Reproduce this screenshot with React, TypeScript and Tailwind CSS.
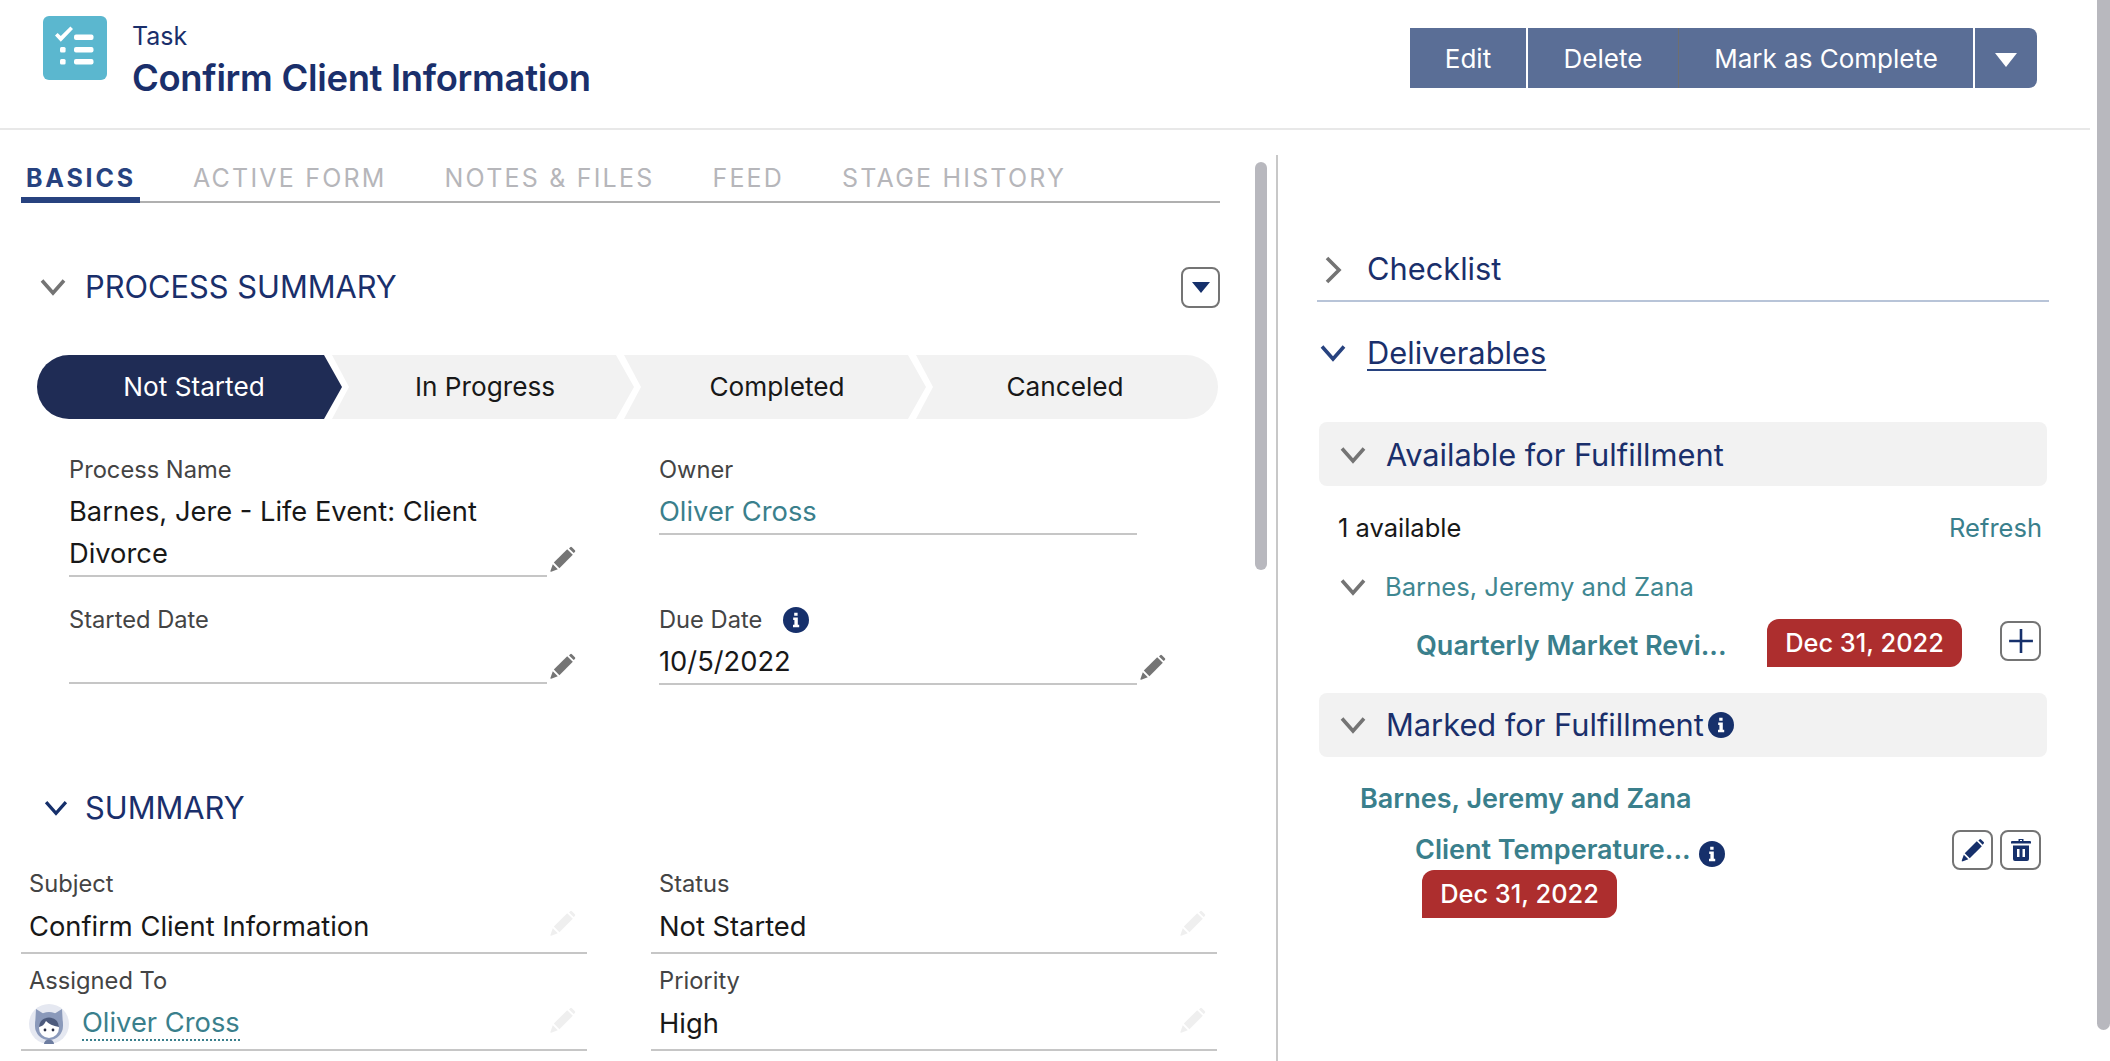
import { ReactNode } from 'react'

function Chevron({ color = '#747474', className = '' }: { color?: string; className?: string }) {
  return (
    <svg viewBox="0 0 26 18" className={`h-[18px] w-[26px] shrink-0 ${className}`} fill="none" stroke={color} strokeWidth="3.6">
      <path d="M2 2.5 13 15 24 2.5" />
    </svg>
  )
}

function ChevronRight() {
  return (
    <svg viewBox="0 0 18 28" className="ml-[7px] h-[28px] w-[18px] shrink-0" fill="none" stroke="#747474" strokeWidth="3.6">
      <path d="M3 2 15 14 3 26" />
    </svg>
  )
}

function Pencil({ color = '#757575', className = '' }: { color?: string; className?: string }) {
  return (
    <svg viewBox="0 0 26 26" className={`h-[26px] w-[26px] shrink-0 ${className}`} fill={color}>
      <path d="M20.2 1.2a1.2 1.2 0 0 1 1.7 0l3 3a1.2 1.2 0 0 1 0 1.7l-1.2 1.2-4.7-4.7z" />
      <path d="M17.2 3.2l5.6 5.6L9.4 22.2l-5.6-5.6z" />
      <path d="M2.8 18.2l5 5-6.6 2.5a.6.6 0 0 1-.8-.8z" />
    </svg>
  )
}

function Info({ className = '' }: { className?: string }) {
  return (
    <svg viewBox="0 0 26 26" className={`h-[26px] w-[26px] shrink-0 ${className}`}>
      <circle cx="13" cy="13" r="13" fill="#16306b" />
      <path d="M11.2 5.8h3.4v3h-3.4zM10.2 10.6h4.6v7.2h1.4v2.4h-6.2v-2.4h1.4v-4.8h-1.2z" fill="#fff" />
    </svg>
  )
}

function TaskIcon() {
  return (
    <div className="flex h-[64px] w-[64px] shrink-0 items-center justify-center rounded-[6px] bg-[#5bb7cf]">
      <svg viewBox="0 0 64 64" className="h-[64px] w-[64px]" fill="#fff">
        <path d="M12 19.5l2.6-2.6 3.2 3.2 9.6-9.6 2.6 2.6-12.2 12.6z" />
        <rect x="31" y="18.5" width="19.5" height="5.6" rx="2" />
        <rect x="17" y="31" width="5.6" height="5.6" rx="1.5" />
        <rect x="31" y="31" width="19.5" height="5.6" rx="2" />
        <rect x="17" y="43" width="5.6" height="5.6" rx="1.5" />
        <rect x="31" y="43" width="19.5" height="5.6" rx="2" />
      </svg>
    </div>
  )
}

function Avatar() {
  return (
    <svg viewBox="0 0 40 40" className="h-[40px] w-[40px] shrink-0">
      <circle cx="20" cy="20" r="20" fill="#e5e8f1" />
      <path d="M7 5l8 5h10l8-5 1 17H6z" fill="#8a99ba" />
      <circle cx="20" cy="22" r="14" fill="#8a99ba" />
      <circle cx="20" cy="24" r="10" fill="#fff" />
      <path d="M10 23c3-.5 5.500-2.500 7-6 2.500 3 7 5 13 6-.5-6-4.500-9.500-10-9.500S10.500 17 10 23z" fill="#4c5a7c" />
      <circle cx="16" cy="26" r="1.400" fill="#2a2f45" />
      <circle cx="24" cy="26" r="1.400" fill="#2a2f45" />
      <path d="M15 40a5 4.500 0 0 1 10 0z" fill="#6d7da0" />
    </svg>
  )
}

function IconBtn({ children }: { children: ReactNode }) {
  return (
    <button className="flex h-[40px] w-[41px] shrink-0 items-center justify-center rounded-[8px] border-2 border-[#747474] bg-white">
      {children}
    </button>
  )
}

function Badge() {
  return (
    <div className="flex h-[48px] w-[195px] shrink-0 items-center justify-center rounded-t-[12px] rounded-br-[12px] bg-[#ad2e2e] text-[25.4px] font-medium text-white">
      Dec 31, 2022
    </div>
  )
}

function ProcessField({ label, info, lines, teal, pencil, tall }: { label: string; info?: boolean; lines: string[]; teal?: boolean; pencil?: boolean; tall?: boolean }) {
  return (
    <div className="w-[507px]">
      <div className="flex h-[32px] items-center gap-[21px] text-[23.7px] leading-[32px] text-[#444]">
        {label}
        {info && <Info />}
      </div>
      <div className={`flex items-end ${tall ? 'mt-[5px]' : 'mt-[4px]'}`}>
        <div className={`w-[478px] border-b-2 border-[#c6c6c6] text-[27.3px] leading-[42px] ${teal ? 'text-[#3a7f8c]' : 'text-[#181818]'}`}>
          {lines.length === 0 && <div className="h-[42px]" />}
          {lines.map((l) => (
            <div key={l}>{l}</div>
          ))}
        </div>
        {pencil && <Pencil className="mb-[5px] ml-[3px]" />}
      </div>
    </div>
  )
}

function SummaryField({ label, children }: { label: string; children: ReactNode }) {
  return (
    <div className="w-[566px]">
      <div className="h-[32px] pl-[8px] text-[23.7px] leading-[32px] text-[#444]">{label}</div>
      <div className="flex h-[54px] items-center justify-between border-b-2 border-[#c6c6c6] pl-[8px] pr-[11px] pt-[2px] text-[27.3px] text-[#181818]">
        <div className="flex items-center">{children}</div>
        <Pencil color="#efefef" className="-mt-[8px]" />
      </div>
    </div>
  )
}

const stages = [
  { name: 'Not Started', first: true },
  { name: 'In Progress' },
  { name: 'Completed' },
  { name: 'Canceled', last: true },
]

export default function App() {
  return (
    <div className="flex h-[1061px] w-[2110px] overflow-hidden bg-white font-['Inter',sans-serif]">
      <div className="w-[2097px] shrink-0">
        <header className="flex h-[130px] w-[2090px] items-start justify-between border-b-2 border-[#e8e8e8]">
          <div className="ml-[43px] mt-[16px] flex">
            <TaskIcon />
            <div className="ml-[25px] mt-[4px]">
              <div className="text-[25px] leading-[32px] text-[#1a2f6b]">Task</div>
              <div className="mt-[4px] text-[36.4px] font-semibold leading-[44px] tracking-[-0.3px] text-[#1a2f6b]">Confirm Client Information</div>
            </div>
          </div>
          <div className="mr-[53px] mt-[28px] flex h-[60px] text-[26px] text-white">
            <button className="w-[116px] bg-[#5a6e96]">Edit</button>
            <button className="ml-[2px] w-[151px] border-r border-[#6f6f6f] bg-[#5a6e96]">Delete</button>
            <button className="w-[294px] bg-[#5a6e96]">Mark as Complete</button>
            <button className="ml-[2px] flex w-[62px] items-center justify-center rounded-r-[8px] bg-[#5a6e96] pt-[4px]">
              <svg viewBox="0 0 22 14" className="h-[14px] w-[22px]" fill="#fff">
                <path d="M0 0h22L11 14z" />
              </svg>
            </button>
          </div>
        </header>

        <div className="flex h-[931px]">
          <div className="w-[1255px] shrink-0 pl-[21px]">
            <div className="flex h-[73px] w-[1199px] items-end gap-[58px] border-b-2 border-[#b0b0b0] text-[25px] leading-[32px] tracking-[2.2px] text-[#b6b6ba]">
              <div className="-mb-[2px] mr-[-5px] h-[50px] w-[119px] border-b-[6px] border-[#27427f] pl-[5px] pt-[9px] font-bold tracking-[2.8px] text-[#27427f]">BASICS</div>
              <div className="pb-[7px]">ACTIVE FORM</div>
              <div className="pb-[7px]">NOTES &amp; FILES</div>
              <div className="pb-[7px]">FEED</div>
              <div className="pb-[7px]">STAGE HISTORY</div>
            </div>

            <div className="mt-[56px] flex h-[56px] w-[1199px] items-center">
              <Chevron className="ml-[19px]" />
              <div className="ml-[19px] flex-1 text-[30.8px] text-[#1a2f6b]">PROCESS SUMMARY</div>
              <button className="flex h-[41px] w-[39px] items-center justify-center rounded-[8px] border-2 border-[#747474]">
                <svg viewBox="0 0 18 11" className="h-[11px] w-[18px]" fill="#16306b">
                  <path d="M0 0h18L9 11z" />
                </svg>
              </button>
            </div>

            <div className="ml-[16px] mt-[40px] flex h-[64px] text-[26.2px]">
              {stages.map((s) => (
                <div
                  key={s.name}
                  className={
                    s.first
                      ? 'flex w-[305px] items-center justify-center rounded-l-[32px] bg-[#1f2c55] pl-[9px] text-white [clip-path:polygon(0_0,287px_0,305px_50%,287px_100%,0_100%)]'
                      : s.last
                        ? '-ml-[10px] flex w-[302px] items-center justify-center rounded-r-[32px] bg-[#f2f2f2] pr-[4px] text-[#181818] [clip-path:polygon(0_0,100%_0,100%_100%,0_100%,17px_50%)]'
                        : '-ml-[10px] flex w-[302px] items-center justify-center bg-[#f2f2f2] pl-[4px] text-[#181818] [clip-path:polygon(0_0,284px_0,302px_50%,284px_100%,0_100%,17px_50%)]'
                  }
                >
                  {s.name}
                </div>
              ))}
            </div>

            <div className="ml-[48px] mt-[35px] grid w-[1097px] grid-cols-[590px_507px]">
              <ProcessField label="Process Name" tall pencil lines={['Barnes, Jere - Life Event: Client', 'Divorce']} />
              <ProcessField label="Owner" tall teal lines={['Oliver Cross']} />
            </div>
            <div className="ml-[48px] mt-[27px] grid w-[1097px] grid-cols-[590px_507px]">
              <ProcessField label="Started Date" pencil lines={[]} />
              <ProcessField label="Due Date" info tall pencil lines={['10/5/2022']} />
            </div>

            <div className="mt-[95px] flex h-[56px] items-center">
              <Chevron color="#16306b" className="ml-[22px] scale-90" />
              <div className="ml-[16px] text-[30.8px] text-[#1a2f6b]">SUMMARY</div>
            </div>

            <div className="mt-[32px] grid w-[1196px] grid-cols-[630px_566px]">
              <SummaryField label="Subject">Confirm Client Information</SummaryField>
              <SummaryField label="Status">Not Started</SummaryField>
            </div>
            <div className="mt-[11px] grid w-[1196px] grid-cols-[630px_566px]">
              <SummaryField label="Assigned To">
                <Avatar />
                <span className="ml-[13px] border-b-2 border-dotted border-[#3a7f8c] leading-[32px] text-[#3a7f8c]">Oliver Cross</span>
              </SummaryField>
              <SummaryField label="Priority">High</SummaryField>
            </div>
          </div>

          <div className="mt-[32px] h-[408px] w-[12px] shrink-0 rounded-full bg-[#b8b8be]" />
          <div className="ml-[9px] mt-[25px] w-[2px] shrink-0 bg-[#c8c8c8]" />

          <div className="ml-[39px] w-[732px] shrink-0">
            <div className="mt-[109px] flex h-[63px] items-center border-b-2 border-[#b8c4d8] text-[30.8px] text-[#1a2f6b]">
              <ChevronRight />
              <span className="ml-[25px]">Checklist</span>
            </div>
            <div className="mt-[31px] flex h-[40px] items-center text-[30.8px] text-[#1a2f6b]">
              <Chevron color="#27427f" className="ml-[3px]" />
              <span className="ml-[21px] underline decoration-[#27427f] decoration-2 underline-offset-[5px]">Deliverables</span>
            </div>

            <div className="mx-[2px] mt-[49px] flex h-[64px] items-center rounded-[8px] bg-[#f2f2f2] pt-[2px] text-[30.8px] text-[#1a2f6b]">
              <Chevron className="ml-[21px]" />
              <span className="ml-[20px]">Available for Fulfillment</span>
            </div>
            <div className="mt-[26px] flex h-[32px] items-center justify-between pl-[21px] pr-[7px] text-[25.5px]">
              <span className="text-[#181818]">1 available</span>
              <span className="text-[#3a7f8c]">Refresh</span>
            </div>
            <div className="mt-[27px] flex h-[32px] items-center text-[25.6px] text-[#3f8791]">
              <Chevron className="ml-[23px]" />
              <span className="ml-[19px]">Barnes, Jeremy and Zana</span>
            </div>
            <div className="mt-[16px] flex h-[48px] items-start">
              <div className="mt-[10px] w-[450px] whitespace-nowrap pl-[99px] text-[27px] font-semibold leading-[34px] text-[#3a7f8c]">Quarterly Market Revi...</div>
              <Badge />
              <div className="ml-[38px] mt-[2px]">
                <IconBtn>
                  <svg viewBox="0 0 24 24" className="h-[26px] w-[26px]" stroke="#16306b" strokeWidth="2.4">
                    <path d="M12 1v22M1 12h22" />
                  </svg>
                </IconBtn>
              </div>
            </div>

            <div className="mx-[2px] mt-[26px] flex h-[64px] items-center rounded-[8px] bg-[#f2f2f2] text-[30.8px] text-[#1a2f6b]">
              <Chevron className="ml-[21px]" />
              <span className="ml-[20px]">Marked for Fulfillment</span>
              <Info className="ml-[4px]" />
            </div>

            <div className="mt-[26px] h-[32px] pl-[43px] text-[27px] font-semibold leading-[32px] text-[#3a7f8c]">Barnes, Jeremy and Zana</div>

            <div className="mt-[15px] flex">
              <div className="ml-[98px]">
                <div className="flex h-[40px] items-center">
                  <span className="text-[27px] font-semibold text-[#3a7f8c]">Client Temperature...</span>
                  <Info className="ml-[8px] mt-[8px]" />
                </div>
                <div className="ml-[7px]">
                  <Badge />
                </div>
              </div>
              <div className="ml-auto mr-[8px] flex gap-[7px]">
                <IconBtn>
                  <Pencil color="#16306b" className="scale-90" />
                </IconBtn>
                <IconBtn>
                  <svg viewBox="0 0 20 22" className="h-[22px] w-[20px]" fill="#16306b">
                    <path fillRule="evenodd" d="M7.500 0h5v2h6.500a1 1 0 0 1 1 1v1.500H0V3a1 1 0 0 1 1-1h6.500zM9 1v1h2V1z" />
                    <path fillRule="evenodd" d="M2 6.500h16V20a2 2 0 0 1-2 2H4a2 2 0 0 1-2-2zM6 10v8h2.500v-8zM11.500 10v8H14v-8z" />
                  </svg>
                </IconBtn>
              </div>
            </div>
          </div>
        </div>
      </div>
      <div className="h-[1030px] w-[13px] shrink-0 rounded-b-full bg-[#b8b8be]" />
    </div>
  )
}
